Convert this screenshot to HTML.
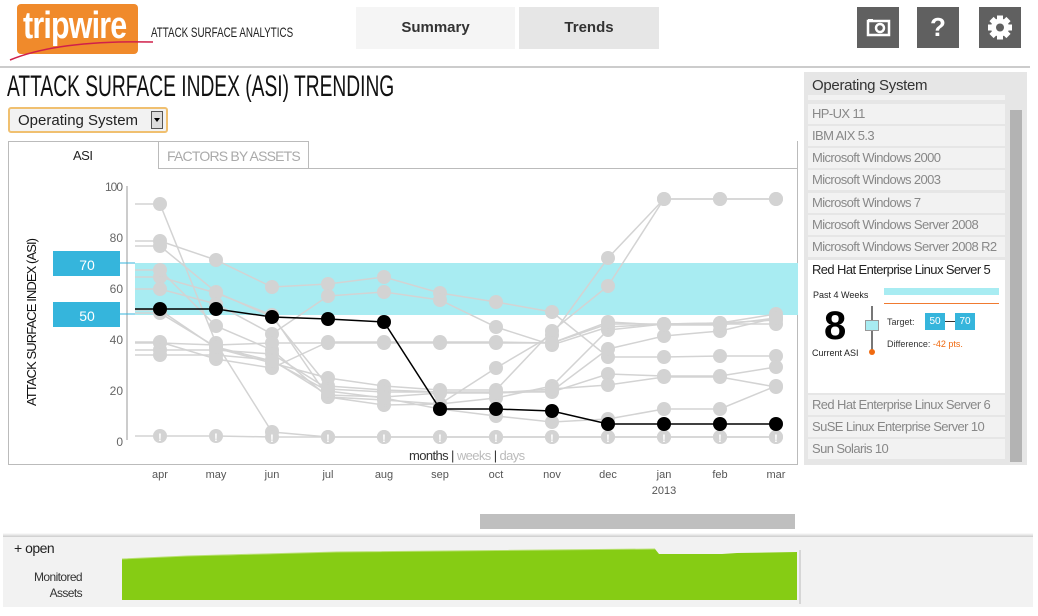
<!DOCTYPE html>
<html><head><meta charset="utf-8"><style>
body{margin:0;width:1038px;height:616px;background:#fff;font-family:"Liberation Sans",sans-serif;position:relative;overflow:hidden}
.a{position:absolute}
.item{position:absolute;left:808px;width:197px;height:20px;background:#f2f2f2;color:#888;font-size:13px;line-height:20px;padding-left:4px;box-sizing:border-box;letter-spacing:-0.6px;white-space:nowrap;overflow:hidden}
</style></head><body>
<div class="a" style="left:17px;top:4px;width:121px;height:50px;background:#f08a2b;border-radius:4px"></div>
<div class="a" style="left:23px;top:6px;color:#fff;font-size:38px;font-weight:bold;letter-spacing:-1px;transform:scaleX(0.8);transform-origin:0 0;line-height:40px">tripwire</div>
<svg class="a" style="left:8px;top:36px" width="145" height="30"><path d="M2 24 Q50 4 145 6" stroke="#d0204a" stroke-width="1.5" fill="none"/></svg>
<div class="a" style="left:151px;top:24px;font-size:14px;color:#222;transform:scaleX(0.7);transform-origin:0 0;white-space:nowrap">ATTACK SURFACE ANALYTICS</div>
<div class="a" style="left:356px;top:7px;width:159px;height:42px;background:#f5f5f5;font-size:15px;font-weight:bold;color:#333;text-align:center;line-height:42px">Summary</div>
<div class="a" style="left:519px;top:7px;width:140px;height:42px;background:#e6e6e6;font-size:15px;font-weight:bold;color:#333;text-align:center;line-height:42px">Trends</div>
<div class="a" style="left:857px;top:7px;width:42px;height:41px;background:#606060"></div>
<svg class="a" style="left:857px;top:7px" width="42" height="41"><rect x="11" y="14" width="21" height="14" fill="none" stroke="#fff" stroke-width="2.5"/><rect x="11" y="12" width="5" height="3" fill="#fff"/><circle cx="23" cy="21" r="4" fill="none" stroke="#fff" stroke-width="2.5"/></svg>
<div class="a" style="left:917px;top:7px;width:42px;height:41px;background:#606060;color:#fff;font-size:26px;font-weight:bold;text-align:center;line-height:41px">?</div>
<div class="a" style="left:979px;top:7px;width:42px;height:41px;background:#606060"></div>
<svg class="a" style="left:979px;top:7px" width="42" height="41"><g transform="translate(21 20.5)" fill="#fff"><rect x="-3" y="-12" width="6" height="24"/><rect x="-3" y="-12" width="6" height="24" transform="rotate(45)"/><rect x="-3" y="-12" width="6" height="24" transform="rotate(90)"/><rect x="-3" y="-12" width="6" height="24" transform="rotate(135)"/><circle r="9"/><circle r="4" fill="#606060"/></g></svg>
<div class="a" style="left:0;top:66px;width:1030px;height:2px;background:#ccc"></div>
<div class="a" style="left:7px;top:70px;font-size:30px;color:#111;transform:scaleX(0.64);transform-origin:0 0;white-space:nowrap">ATTACK SURFACE INDEX (ASI) TRENDING</div>
<div class="a" style="left:8px;top:107px;width:160px;height:26px;box-sizing:border-box;border:2px solid #f0c070;border-radius:3px;background:#f2f2f2;font-size:15px;line-height:24px;padding-left:8px;color:#222">Operating System</div>
<div class="a" style="left:151px;top:111px;width:12px;height:18px;background:#ddd;border:1px solid #555;box-sizing:border-box"></div>
<div class="a" style="left:154px;top:118px;border:3px solid transparent;border-top:4px solid #000"></div>
<div class="a" style="left:8px;top:141px;width:790px;height:324px;box-sizing:border-box;border:1px solid #bbb;border-top:none"></div>
<div class="a" style="left:8px;top:141px;width:151px;height:1px;background:#bbb"></div>
<div class="a" style="left:158px;top:141px;width:151px;height:28px;box-sizing:border-box;border:1px solid #bbb;color:#aaa;font-size:14px;text-align:center;line-height:28px;letter-spacing:-0.8px">FACTORS BY ASSETS</div>
<div class="a" style="left:309px;top:168px;width:489px;height:1px;background:#bbb"></div>
<div class="a" style="left:73px;top:148px;font-size:13px;color:#222;letter-spacing:-0.5px">ASI</div>
<svg class="a" style="left:0;top:0" width="800" height="500" font-family="Liberation Sans" >
<rect x="135" y="263" width="663" height="52" fill="#a8ecf2"/>
<line x1="127" y1="186" x2="127" y2="440" stroke="#ccc" stroke-width="2"/>
<g font-size="12" fill="#666" text-anchor="end"><text x="123" y="191" textLength="18">100</text><text x="123" y="242">80</text><text x="123" y="293">60</text><text x="123" y="344">40</text><text x="123" y="395">20</text><text x="123" y="446">0</text></g>
<text transform="translate(36 406) rotate(-90)" font-size="13" fill="#111" textLength="168">ATTACK SURFACE INDEX (ASI)</text>
<rect x="53" y="251" width="67" height="25" fill="#35b5dc"/><text x="87" y="270" fill="#fff" font-size="14" text-anchor="middle">70</text>
<rect x="53" y="302" width="67" height="25" fill="#35b5dc"/><text x="87" y="321" fill="#fff" font-size="14" text-anchor="middle">50</text>
<line x1="120" y1="263" x2="135" y2="263" stroke="#35b5dc"/><line x1="120" y1="314" x2="135" y2="314" stroke="#35b5dc"/>
<g id="gr" fill="none" stroke="#d3d3d3" stroke-width="1.5"></g>
<g id="gd" fill="#d3d3d3"></g>
<g id="bl"></g>
<g font-size="11" fill="#555" text-anchor="middle"><text x="160" y="478">apr</text><text x="216" y="478">may</text><text x="272" y="478">jun</text><text x="328" y="478">jul</text><text x="384" y="478">aug</text><text x="440" y="478">sep</text><text x="496" y="478">oct</text><text x="552" y="478">nov</text><text x="608" y="478">dec</text><text x="664" y="478">jan</text><text x="720" y="478">feb</text><text x="776" y="478">mar</text><text x="664" y="494">2013</text></g>
<text x="409" y="460" font-size="13" fill="#333" letter-spacing="-0.6">months | <tspan fill="#bbb">weeks</tspan> | <tspan fill="#bbb">days</tspan></text>
</svg>
<div class="a" style="left:804px;top:72px;width:223px;height:393px;background:#e6e6e6"></div>
<div class="a" style="left:812px;top:77px;font-size:15px;color:#333;letter-spacing:-0.3px">Operating System</div>
<div class="item" style="top:95px;height:5px"></div>
<div class="item" style="top:104px">HP-UX 11</div>
<div class="item" style="top:126px">IBM AIX 5.3</div>
<div class="item" style="top:148px">Microsoft Windows 2000</div>
<div class="item" style="top:170px">Microsoft Windows 2003</div>
<div class="item" style="top:193px">Microsoft Windows 7</div>
<div class="item" style="top:215px">Microsoft Windows Server 2008</div>
<div class="item" style="top:237px">Microsoft Windows Server 2008 R2</div>
<div class="a" style="left:808px;top:260px;width:197px;height:133px;background:#fff"></div>
<div class="a" style="left:812px;top:262px;font-size:13px;color:#222;letter-spacing:-0.6px;white-space:nowrap">Red Hat Enterprise Linux Server 5</div>
<div class="a" style="left:813px;top:290px;font-size:9px;color:#222">Past 4 Weeks</div>
<div class="a" style="left:824px;top:302px;font-size:40px;font-weight:bold;color:#000;line-height:48px">8</div>
<div class="a" style="left:812px;top:348px;font-size:9px;color:#222">Current ASI</div>
<div class="a" style="left:871px;top:306px;width:2px;height:46px;background:#777"></div>
<div class="a" style="left:865px;top:320px;width:14px;height:11px;background:#a8ecf2;border:1px solid #999;box-sizing:border-box"></div>
<div class="a" style="left:869px;top:349px;width:6px;height:6px;border-radius:50%;background:#f06a10"></div>
<div class="a" style="left:884px;top:288px;width:115px;height:7px;background:#a8ecf2"></div>
<div class="a" style="left:884px;top:303px;width:115px;height:1px;background:#f07a30"></div>
<div class="a" style="left:887px;top:317px;font-size:9px;color:#333">Target:</div>
<div class="a" style="left:925px;top:313px;width:20px;height:17px;background:#35b5dc;color:#fff;font-size:10px;text-align:center;line-height:17px">50</div>
<div class="a" style="left:945px;top:321px;width:10px;height:1px;background:#333"></div>
<div class="a" style="left:955px;top:313px;width:20px;height:17px;background:#35b5dc;color:#fff;font-size:10px;text-align:center;line-height:17px">70</div>
<div class="a" style="left:887px;top:339px;font-size:9px;color:#333">Difference: <span style="color:#f06a10">-42 pts.</span></div>
<div class="item" style="top:395px">Red Hat Enterprise Linux Server 6</div>
<div class="item" style="top:417px">SuSE Linux Enterprise Server 10</div>
<div class="item" style="top:439px">Sun Solaris 10</div>
<div class="a" style="left:1010px;top:110px;width:12px;height:352px;background:#b3b3b3"></div>
<div class="a" style="left:480px;top:514px;width:315px;height:15px;background:#bfbfbf"></div>
<div class="a" style="left:3px;top:533px;width:1030px;height:4px;background:linear-gradient(#fff,#ccc)"></div>
<div class="a" style="left:3px;top:537px;width:1030px;height:70px;background:#f2f2f2"></div>
<div class="a" style="left:14px;top:540px;font-size:14px;color:#222;letter-spacing:-0.5px">+ open</div>
<div class="a" style="left:22px;top:569px;font-size:12px;color:#333;text-align:right;width:60px;line-height:16px;letter-spacing:-0.6px">Monitored Assets</div>
<svg class="a" style="left:122px;top:548px" width="682" height="56"><path d="M0 11 L45 9 L65 8 L115 7 L150 6 L175 5 L215 4 L320 3 L420 2 L533 1 L537 6 L600 6 L615 5 L675 4 L675 52 L0 52Z" fill="#86cc14"/><path d="M0 11 L65 8 L215 4 L533 1" stroke="#b8e070" fill="none"/><line x1="678" y1="2" x2="678" y2="56" stroke="#bbb"/></svg>
<script>
var X=[160,216,272,328,384,440,496,552,608,664,720,776];
var S=[
[204,343,432,437,437,437,437,437,437,437,437,437],
[241,260,287,284,277,293,302,312,357,357,356,356],
[246,292,317,386,390,392,393,391,349,336,331,318],
[277,293,315,397,405,404,398,386,330,324,323,314],
[289,304,334,296,292,300,327,345,327,324,323,320],
[270,326,350,397,400,404,368,335,258,199,199,199],
[310,348,363,378,386,390,390,331,286,199,199,199],
[343,345,343,343,343,343,343,343,324,324,324,324],
[342,359,368,342,342,342,342,343,322,325,325,318],
[350,350,354,389,392,392,392,392,374,376,376,367],
[355,355,360,395,397,393,393,389,385,377,377,387],
[436,436,437,437,437,437,437,437,437,437,437,437],
[313,347,361,391,398,409,416,422,419,409,409,386]];
var gr=document.getElementById('gr'),gd=document.getElementById('gd'),bl=document.getElementById('bl');
var ns='http://www.w3.org/2000/svg';
function el(t,a,p){var e=document.createElementNS(ns,t);for(var k in a)e.setAttribute(k,a[k]);p.appendChild(e);return e;}
S.forEach(function(s){var d='M135 '+s[0];s.forEach(function(y,i){d+=' L'+X[i]+' '+y;el('circle',{cx:X[i],cy:y,r:7},gd);});el('path',{d:d},gr);});
S[11].forEach(function(y,i){var t=el('text',{x:X[i],y:y+5,'font-size':11,'font-weight':'bold',fill:'#fff','text-anchor':'middle'},gd);t.textContent='!';});
var B=[309,309,317,319,322,409,409,411,424,424,424,424];
var d='M135 309';B.forEach(function(y,i){d+=' L'+X[i]+' '+y;});
el('path',{d:d,stroke:'#000','stroke-width':1.5,fill:'none'},bl);
B.forEach(function(y,i){el('circle',{cx:X[i],cy:y,r:7,fill:'#000'},bl);});
</script>
</body></html>
